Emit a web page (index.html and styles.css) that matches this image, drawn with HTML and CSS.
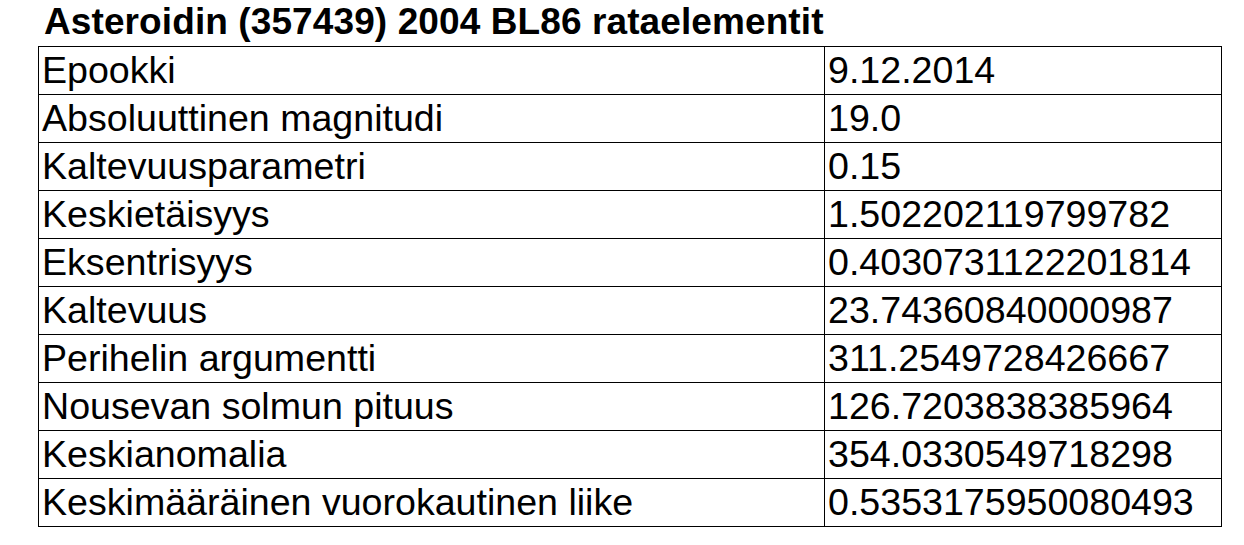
FILE: index.html
```html
<!DOCTYPE html>
<html lang="fi">
<head>
<meta charset="utf-8">
<title>Asteroidin (357439) 2004 BL86 rataelementit</title>
<link rel="stylesheet" href="styles.css">
</head>
<body>
<div class="page">
  <div class="title">Asteroidin (357439) 2004 BL86 rataelementit</div>
  <table class="elements">
    <colgroup><col class="c-name"><col class="c-value"></colgroup>
    <tbody>
      <tr><td>Epookki</td><td>9.12.2014</td></tr>
      <tr><td>Absoluuttinen magnitudi</td><td>19.0</td></tr>
      <tr><td>Kaltevuusparametri</td><td>0.15</td></tr>
      <tr><td>Keskietäisyys</td><td>1.502202119799782</td></tr>
      <tr><td>Eksentrisyys</td><td>0.4030731122201814</td></tr>
      <tr><td>Kaltevuus</td><td>23.74360840000987</td></tr>
      <tr><td>Perihelin argumentti</td><td>311.2549728426667</td></tr>
      <tr><td>Nousevan solmun pituus</td><td>126.7203838385964</td></tr>
      <tr><td>Keskianomalia</td><td>354.0330549718298</td></tr>
      <tr><td>Keskimääräinen vuorokautinen liike</td><td>0.5353175950080493</td></tr>
    </tbody>
  </table>
</div>
</body>
</html>
```
FILE: styles.css
```css
html, body {
  margin: 0;
  padding: 0;
  background: #fff;
}
.page {
  padding: 1px 0 0 38px;
  font-family: "Liberation Sans", Arial, sans-serif;
  color: #000;
}
.title {
  font-weight: bold;
  font-size: 37px;
  line-height: 42px;
  padding-left: 6px;
  letter-spacing: 0.1px;
  white-space: nowrap;
}
.elements {
  margin-top: 3px;
  border-collapse: collapse;
  table-layout: fixed;
  width: 1184px;
  font-size: 37.6px;
}
.c-name { width: 786px; }
.elements td {
  border: 1px solid #000;
  padding: 0 2px 1px 3px;
  line-height: 46px;
  white-space: nowrap;
  vertical-align: top;
}
```
